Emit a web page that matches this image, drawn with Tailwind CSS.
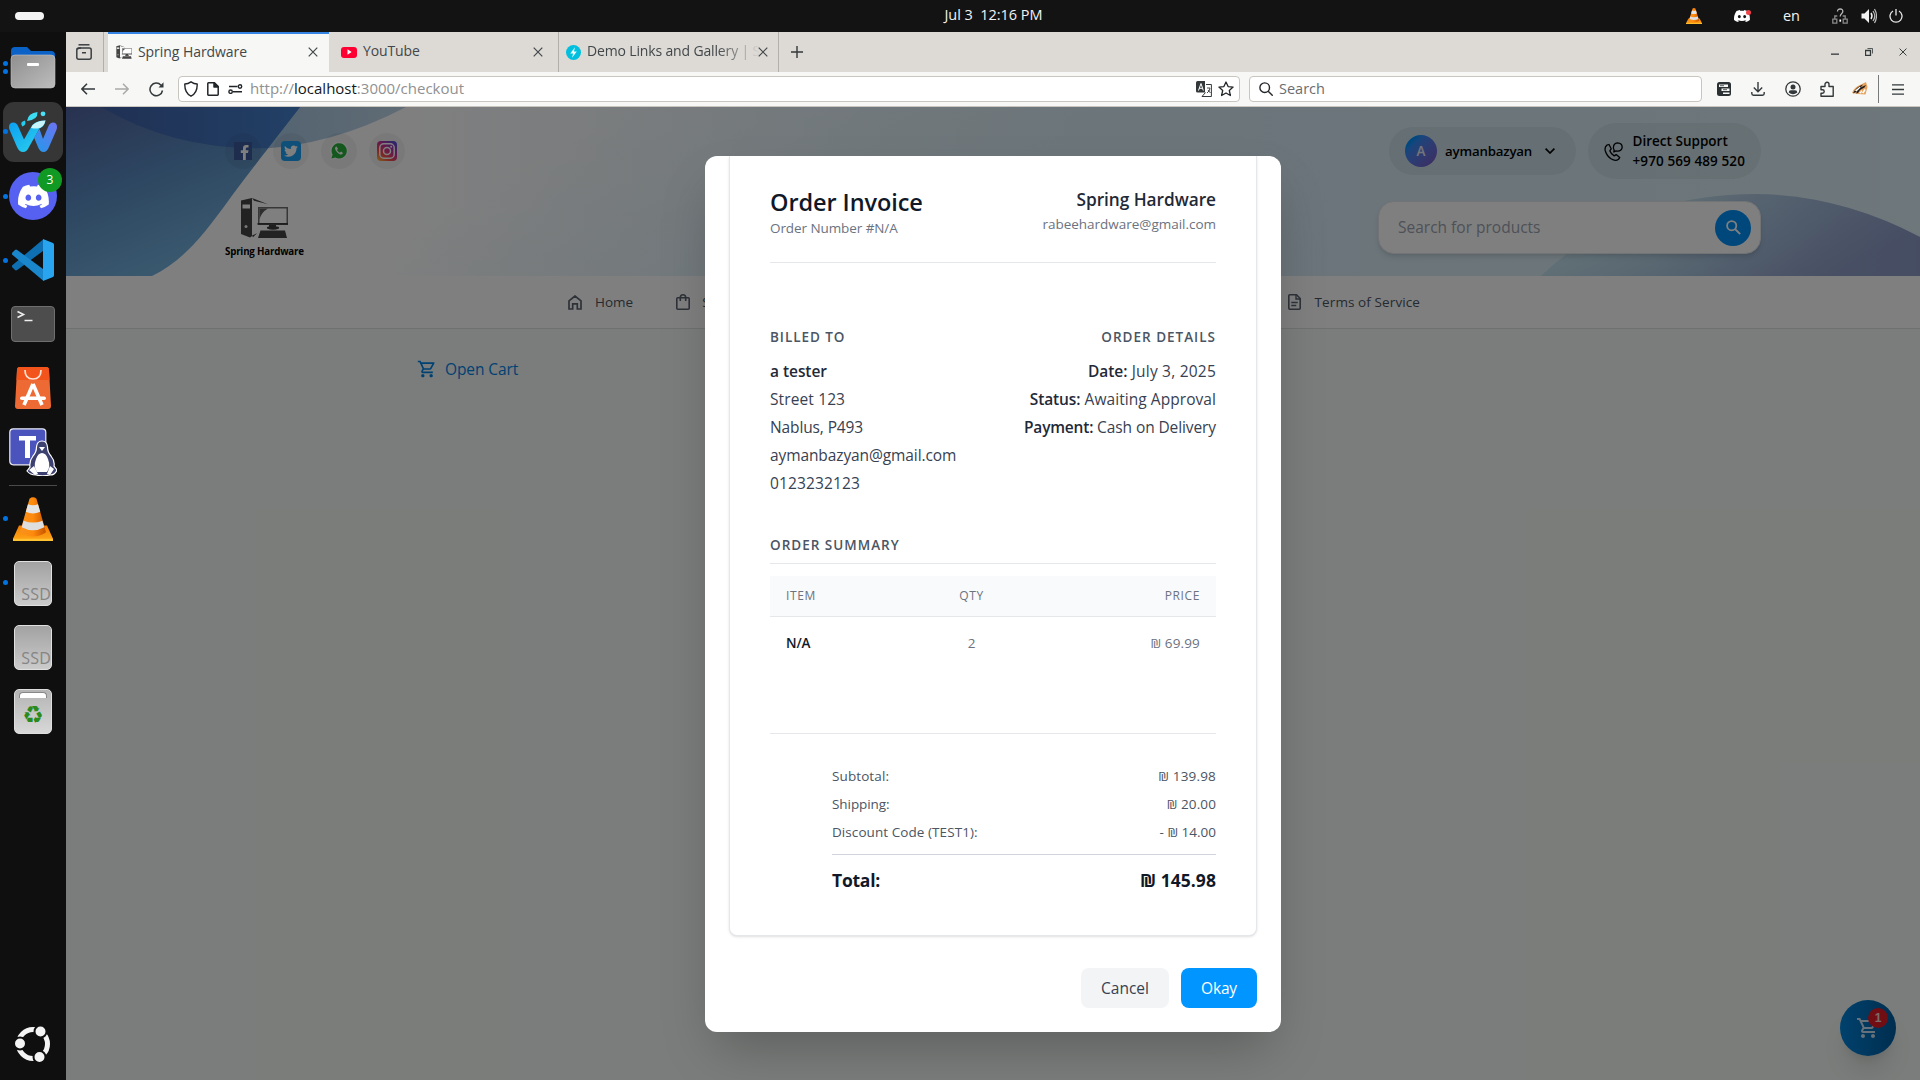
<!DOCTYPE html>
<html lang="en">
<head>
<meta charset="utf-8">
<title>Spring Hardware</title>
<script src="https://cdn.jsdelivr.net/npm/@tailwindcss/browser@4"></script>
</head>
<body class="w-[1920px] h-[1080px] overflow-hidden bg-[#131313] font-['Open_Sans','Noto_Sans',sans-serif] flex flex-col">

<svg class="absolute size-0">
  <defs>
    <linearGradient id="coneG" x1="0" x2="1" y1="0" y2="0"><stop offset="0" stop-color="#f7921e"/><stop offset=".5" stop-color="#ff8a0c"/><stop offset="1" stop-color="#c65300"/></linearGradient>
    <linearGradient id="baseG" x1="0" x2="0" y1="0" y2="1"><stop offset="0" stop-color="#f47b00"/><stop offset="1" stop-color="#ffa91c"/></linearGradient>
  </defs>
  <symbol id="vlc" viewBox="0 0 40 40">
    <path d="M6 26h28l6 12v2H0v-2z" fill="url(#baseG)"/>
    <path d="M0 38h40v2H0z" fill="#ffc233"/>
    <path d="M16.500 1.500Q20-1 23.500 1.500L33 32Q20 40 7 32z" fill="url(#coneG)"/>
    <path d="M15 6.500Q20 8.500 25 6.500L27.200 13.500Q20 16.500 12.800 13.500z" fill="#e4e4e4"/>
    <path d="M10.600 21.500Q20 25 29.400 21.500L31.300 27.500Q20 33 8.700 27.500z" fill="#dedede"/>
  </symbol>
  <symbol id="discord" viewBox="0 0 24 24">
    <path fill="currentColor" d="M20.300 4.400A19.800 19.800 0 0 0 15.400 2.900c-.2.400-.5.900-.6 1.300a18.300 18.300 0 0 0-5.500 0c-.2-.400-.4-.900-.6-1.300a19.700 19.700 0 0 0-4.900 1.500C.5 9-.3 13.600.1 18.100a19.900 19.900 0 0 0 6 3c.5-.6.9-1.300 1.200-2a13 13 0 0 1-1.900-.9l.4-.3a14.200 14.200 0 0 0 12.300 0l.4.300c-.6.400-1.200.6-1.900.9.400.7.800 1.400 1.200 2a19.800 19.800 0 0 0 6-3c.5-5.200-.8-9.700-3.500-13.700zM8 15.300c-1.200 0-2.200-1.100-2.200-2.400s1-2.400 2.200-2.400 2.200 1.100 2.200 2.400-1 2.400-2.200 2.400zm8 0c-1.200 0-2.200-1.100-2.200-2.400s1-2.400 2.200-2.400 2.200 1.100 2.200 2.400-1 2.400-2.200 2.400z"/>
  </symbol>
  <symbol id="cart" viewBox="0 0 24 24">
    <path fill="currentColor" d="M15.550 13c.75 0 1.410-.41 1.750-1.030l3.580-6.490A.996.996 0 0 0 20.010 4H5.210l-.94-2H1v2h2l3.600 7.590-1.350 2.440C4.520 15.370 5.480 17 7 17h12v-2H7l1.100-2h7.450zM6.160 6h12.150l-2.760 5H8.530L6.160 6zM7 18c-1.100 0-1.990.9-1.990 2S5.900 22 7 22s2-.9 2-2-.9-2-2-2zm10 0c-1.100 0-1.990.9-1.990 2s.89 2 1.990 2 2-.9 2-2-.9-2-2-2z"/>
  </symbol>
  <symbol id="x" viewBox="0 0 10 10"><path d="M.7.700l8.600 8.600M9.300.700L.7 9.300" stroke="currentColor" stroke-width="1.200" fill="none"/></symbol>
  <symbol id="pc" viewBox="0 0 48 42">
    <path d="M1 3.500L12 1v38l-2 1.500L1 37z" fill="#454545"/>
    <path d="M2.500 7.500h7.500v4H2.500z" fill="#fff"/>
    <circle cx="6" cy="29.500" r="1.500" fill="#eee"/>
    <path d="M12 1l16 6.200L14 3.800zM12 38.500l5-2.200-4 4z" fill="#454545"/>
    <path d="M18 10h30v18H18z" fill="#6e6e6e"/>
    <path d="M19.500 11.500h27v14.500h-27z" fill="#fff"/>
    <path d="M19.500 11.500h8.500q-7 4-8.500 11z" fill="#5a5a5a"/>
    <path d="M17.500 26h30.500v1.800H17.500zM29 28h7v1.500h-7zM27 30q5.500-2 12 0v1.500q-6 2.500-12 0z" fill="#3c3c3c"/>
    <path d="M20.500 33.500h24.500l2 7.500H18z" fill="#454545"/>
  </symbol>
</svg>

<!-- system bar -->
<div class="h-8 shrink-0 pl-[66px] pr-[13px] grid grid-cols-[1fr_auto_1fr] items-center text-[#f2f2f2] text-[14.5px]">
  <div class="-ml-[51px] w-[29px] h-2 rounded-full bg-[#f4f4f4]"></div>
  <div class="whitespace-pre tracking-[-0.03px] translate-x-[7px] -mt-0.5">Jul 3  12:16 PM</div>
  <div class="flex items-center justify-end">
    <svg class="w-4 h-4"><use href="#vlc"/></svg>
    <div class="relative ml-8 mr-px w-4 h-4 flex items-center">
      <svg class="w-4 h-4 text-white"><use href="#discord"/></svg>
      <span class="absolute -right-px top-0.5 size-[5px] rounded-full bg-[#f04349]"></span>
    </div>
    <span class="ml-8 leading-4">en</span>
    <svg class="ml-8 w-4 h-4" viewBox="0 0 16 16" fill="none" stroke="#8a8a8a" stroke-width="1.300"><path d="M.8 11.200h4v4h-4zM11.200 11.200h4v4h-4zM2.800 11V8h2.500M13.200 11V8h-2.500"/><path d="M5.500 3.500q0-2.500 2.700-2.500t2.600 2.500c0 2-2.600 2-2.600 5" stroke="#b8b8b8"/><path d="M7.400 11.500h1.700v2.200H7.400z" fill="#fff" stroke="none"/></svg>
    <svg class="ml-[13px] w-4 h-4" viewBox="0 0 16 16"><path d="M.5 5.500h3L8 1v14L3.500 10.500h-3z" fill="#f2f2f2"/><path d="M10 5q2 3 0 6" stroke="#f2f2f2" stroke-width="1.500" fill="none"/><path d="M12 3q3.500 5 0 10M13.500 1q4 7 0 14" stroke="#bbb" stroke-width="1.200" fill="none"/></svg>
    <svg class="ml-3 mr-1 w-[14px] h-[14px]" viewBox="0 0 14 14" fill="none" stroke="#e8e8e8" stroke-width="1.300"><path d="M4 2a6 6 0 1 0 6 0M7 0v6.500"/></svg>
  </div>
</div>

<div class="flex flex-1 min-h-0">
  <!-- dock -->
  <aside class="w-[66px] shrink-0 bg-[#0f0f0f] pt-1 pb-[18px] flex flex-col items-center">
    <div class="relative w-full h-16 shrink-0 flex items-center justify-center">
      <span class="absolute left-[3px] top-[25px] size-[5px] rounded-full bg-[#0073e5]"></span>
      <span class="absolute left-[3px] top-[33px] size-[5px] rounded-full bg-[#0073e5]"></span>
      <svg class="w-[46px] h-[42px]" viewBox="0 0 46 42"><defs><linearGradient id="fg" x1="0" y1="0" x2="1" y2="1"><stop offset="0" stop-color="#8f8f8f"/><stop offset="1" stop-color="#bdbdbd"/></linearGradient></defs><path d="M1 4a4 4 0 0 1 4-4h12l4 4h20a4 4 0 0 1 4 4v8H1z" fill="#0a62c6"/><path d="M1 12q0-4 4-4h36q4 0 4 4v25a4 4 0 0 1-4 4H5a4 4 0 0 1-4-4z" fill="url(#fg)" stroke="#c4c4c4" stroke-width=".6"/><rect x="17" y="16" width="12" height="3" rx="1" fill="#fff"/></svg>
    </div>
    <div class="relative w-full h-16 shrink-0 flex items-center justify-center">
      <div class="size-[60px] rounded-[11px] bg-[#363636] flex items-center justify-center">
        <svg class="w-12 h-[42px]" viewBox="0 0 48 42">
          <defs>
            <linearGradient id="w1" x1="0" y1="0" x2="1" y2="1"><stop offset="0" stop-color="#0b9df0"/><stop offset="1" stop-color="#2fd6ee"/></linearGradient>
            <linearGradient id="w2" x1="0" y1="1" x2="1" y2="0"><stop offset="0" stop-color="#1f9bea"/><stop offset="1" stop-color="#6f72f2"/></linearGradient>
          </defs>
          <path d="M0 16q0-4.500 4.500-4.500 3 0 4.500 3.500l6 13.500 8-14q4-5 13.500-5-1 6-6 8L20 36q-2 5-6 5t-6-5L.6 19Q0 17.500 0 16z" fill="url(#w1)"/>
          <path d="M25 26.500l5.500-8.500L34 28l5.500-13q1.500-3.500 4.500-3.500 4 0 4 4.500 0 1.500-.6 3L40 36q-2 5-5.500 5T29 36z" fill="url(#w2)"/>
          <path d="M22 17q3-7.500 14.500-7.500-1.500 7-8 8-2 .4-6.500-.5z" fill="#c8f5fb"/>
          <path d="M18 10q1-8 10.500-9 .5 8-10.500 9z" fill="#3cdcf3"/><circle cx="34" cy="2.800" r="2.400" fill="#4be0f6"/><path d="M13.500 15.500q-3.500-4.500 2.500-6 1.500 4.500-2.500 6z" fill="#26cdf2"/>
        </svg>
      </div>
      <span class="absolute left-[3px] top-[29px] size-[5px] rounded-full bg-[#0073e5]"></span>
    </div>
    <div class="relative w-full h-16 shrink-0 flex items-center justify-center">
      <span class="absolute left-[3px] top-[30px] size-[5px] rounded-full bg-[#0073e5]"></span>
      <div class="size-12 rounded-full bg-[#5661f2] flex items-center justify-center text-white"><svg class="size-[31px]"><use href="#discord"/></svg></div>
      <span class="absolute left-[38px] top-[4px] size-[24px] rounded-full bg-[#109a23] text-white text-[12px] leading-[24px] text-center">3</span>
    </div>
    <div class="relative w-full h-16 shrink-0 flex items-center justify-center">
      <span class="absolute left-[3px] top-[30px] size-[5px] rounded-full bg-[#0073e5]"></span>
      <svg class="w-[42px] h-[42px]" viewBox="0 0 42 42"><path d="M0 26.500q-.5 1 .5 2L3 31q1 .8 2.200 0L31 12V.500z" fill="#0e6fb3"/><path d="M0 15.500q-.5-1 .5-2L3 11q1-.8 2.200 0L31 30v11.500z" fill="#1a87cd"/><path d="M31 0l10 4q1 .5 1 2v30q0 1.500-1 2l-10 4z" fill="#28a5ee"/></svg>
    </div>
    <div class="w-full h-16 shrink-0 flex items-center justify-center">
      <div class="w-11 h-9 rounded-[4px] bg-[#4d4d4d] border border-[#6f6f6f]"><svg class="size-full" viewBox="0 0 42 34" fill="none" stroke="#eee" stroke-width="1.600"><path d="M5.500 4.500l6 3-6 3M12.500 13.500h8"/></svg></div>
    </div>
    <div class="w-full h-16 shrink-0 flex items-center justify-center">
      <svg class="w-9 h-[42px]" viewBox="0 0 36 42"><path d="M2 3a3 3 0 0 1 3-3h26a3 3 0 0 1 3 3l2 36a3 3 0 0 1-3 3H3a3 3 0 0 1-3-3z" fill="#ee6a34"/><path d="M2 3a3 3 0 0 1 3-3h26a3 3 0 0 1 3 3l.5 10H1.500z" fill="#f2541b"/><path d="M10 3q0 9 8 9t8-9" fill="none" stroke="#ffe3d6" stroke-width="1.700"/><path d="M18 17L9 38M18 17l9 21" stroke="#fff" stroke-width="3.600" fill="none"/><rect x="5" y="29.500" width="26" height="3.600" rx="1.800" fill="#fff"/></svg>
    </div>
    <div class="w-full h-16 shrink-0 flex items-center justify-center">
      <svg class="w-12 h-12" viewBox="0 0 48 48"><rect x=".8" y=".8" width="36" height="36" rx="3.500" fill="#4b53bc" stroke="#e9e9f5" stroke-width="1.200"/><path d="M10 8h17v4.500h-6V30h-5V12.500h-6z" fill="#fff"/><path d="M33 13q5 0 5.500 6 0 5 3.500 9 4 5 3 10l3 4q-2 5-7 5-8 1.500-14 0-6 0-9-4l3-4q-1-6 3-11 3.500-4 3.500-9 .5-6 5.500-6z" fill="#3c4170" stroke="#fff" stroke-width="1.200"/><path d="M33 25q4 0 6 6 3 8-1 13h-10q-4-5-1-13 2-6 6-6zM30 19h6l-3 4z" fill="#fff"/><path d="M20 42l5-4 4 8-3 1zM45 41l-4-3-3 8 3 1z" fill="#fff"/></svg>
    </div>
    <div class="w-12 h-px my-px bg-[#4a4a4a] shrink-0"></div>
    <div class="relative w-full h-16 shrink-0 flex items-center justify-center">
      <span class="absolute left-[3px] top-[29px] size-[5px] rounded-full bg-[#0073e5]"></span>
      <svg class="w-10 h-11" viewBox="0 0 40 40" preserveAspectRatio="none"><use href="#vlc" width="40" height="40"/></svg>
    </div>
    <div class="relative w-full h-16 shrink-0 flex items-center justify-center">
      <span class="absolute left-[3px] top-[29px] size-[5px] rounded-full bg-[#0073e5]"></span>
      <div class="w-[38px] h-[45px] rounded-[5px] bg-linear-to-b from-[#a2a2a2] to-[#cbcbcb] border border-[#e0e0e0] flex items-end justify-end text-[16px] leading-[22px] tracking-[0.2px] text-[#858585]">SSD</div>
    </div>
    <div class="w-full h-16 shrink-0 flex items-center justify-center">
      <div class="w-[38px] h-[45px] rounded-[5px] bg-linear-to-b from-[#a2a2a2] to-[#cbcbcb] border border-[#e0e0e0] flex items-end justify-end text-[16px] leading-[22px] tracking-[0.2px] text-[#858585]">SSD</div>
    </div>
    <div class="w-full h-16 shrink-0 flex items-center justify-center">
      <div class="w-[38px] h-[45px] rounded-[5px] bg-linear-to-b from-[#b4b4b4] to-[#d8d8d8] border border-[#dedede] flex flex-col items-center">
        <div class="mt-[2px] w-[28px] h-[6px] bg-white border border-[#888] border-b-0 rounded-t"></div>
        <span class="text-[24px] leading-[28px] mt-[3px] text-[#2a8a1c] font-['DejaVu_Sans',sans-serif]">♻</span>
      </div>
    </div>
    <svg class="mt-auto w-9 h-9" viewBox="0 0 36 36"><circle cx="18" cy="18" r="14.500" fill="none" stroke="#f4f4f4" stroke-width="5"/><g fill="#f4f4f4" stroke="#0f0f0f" stroke-width="2"><circle cx="5" cy="17.500" r="6"/><circle cx="25.500" cy="5.500" r="6"/><circle cx="24.500" cy="31" r="6"/></g></svg>
  </aside>

  <!-- browser window -->
  <main class="flex-1 min-w-0 flex flex-col">
    <!-- tabs -->
    <div class="h-10 shrink-0 bg-[#dddad5] flex items-center text-[14px] leading-5 text-[#42474a]">
      <div class="w-[38px] h-full border-r border-[#b2afaa] flex items-center justify-center">
        <svg class="w-4 h-4 -ml-0.5" viewBox="0 0 16 16" fill="none" stroke="#3a3f42" stroke-width="1.500"><path d="M2.500.800h11"/><rect x=".8" y="4" width="14.400" height="11.200" rx="2"/><path d="M1 5.200q2-1.200 4-1.200M6 8.800h4"/></svg>
      </div>
      <div class="ml-1 w-[221px] h-full bg-[#f7f7f5] border-t-2 border-[#3584e4] flex items-center pl-2 pr-[11px] pb-0.5">
        <svg class="w-4 h-[14px]" ><use href="#pc"/></svg>
        <span class="ml-[6px] tracking-[-0.06px]">Spring Hardware</span>
        <svg class="ml-auto size-[10px]"><use href="#x"/></svg>
      </div>
      <div class="w-[230px] h-full border-r border-[#b2afaa] flex items-center pl-3 pr-[15px]">
        <span class="w-4 h-[11px] rounded-[3px] bg-[#ff0033] flex items-center justify-center"><svg class="w-[5px] h-[6px]" viewBox="0 0 5 6"><path d="M.5.200L4.700 3 .5 5.800z" fill="#fff"/></svg></span>
        <span class="ml-[6px] -mt-0.5 tracking-[-0.13px]">YouTube</span>
        <svg class="ml-auto size-[10px]"><use href="#x"/></svg>
      </div>
      <div class="w-[220px] h-full border-r border-[#b2afaa] flex items-center pl-[7px] pr-[10px]">
        <svg class="size-[15px] shrink-0" viewBox="0 0 16 16"><circle cx="8" cy="8" r="8" fill="#00bfdf"/><path d="M9.500 2.500L4.500 9h3l-1 4.500L11.500 7h-3z" fill="#e9fbff"/></svg>
        <span class="ml-[6px] -mt-0.5 -mr-2 shrink-0 whitespace-nowrap tracking-[-0.15px] mask-r-from-75% mask-r-to-100%">Demo Links and Gallery | S</span>
        <svg class="ml-auto size-[10px] shrink-0"><use href="#x"/></svg>
      </div>
      <svg class="ml-3 size-3" viewBox="0 0 12 12" stroke="#33383b" stroke-width="1.400"><path d="M6 0v12M0 6h12"/></svg>
      <div class="ml-auto mr-[13px] flex items-center gap-[26px] text-[#33383b]">
        <svg class="w-2 h-2" viewBox="0 0 8 8"><path d="M0 5.500h8v1.300H0z" fill="#33383b"/></svg>
        <svg class="w-2 h-2" viewBox="0 0 8 8" fill="none" stroke="#33383b"><path d="M.5 2.500h5v5h-5z" stroke-width="1.300"/><path d="M2.500.500h5v5" stroke-width=".8"/></svg>
        <svg class="size-2"><use href="#x"/></svg>
      </div>
    </div>
    <!-- toolbar -->
    <div class="h-[35px] shrink-0 bg-[#f7f7f5] border-b border-[#c9c6bf] flex items-center text-[15px] leading-5 text-[#33383b] pr-[14px]">
      <svg class="ml-[15px] w-[14px] h-3" viewBox="0 0 14 12" fill="none" stroke="#33383b" stroke-width="1.500"><path d="M14 6H1M6 .7L.9 6 6 11.300"/></svg>
      <svg class="ml-5 w-[14px] h-3" viewBox="0 0 14 12" fill="none" stroke="#ababa9" stroke-width="1.500"><path d="M0 6h13M8 .7L13.100 6 8 11.300"/></svg>
      <svg class="ml-5 size-[15px]" viewBox="0 0 15 15" fill="none" stroke="#33383b" stroke-width="1.500"><path d="M13.500 8.500A6.300 6.300 0 1 1 12 3.200"/><path d="M9.500 5.500H14.500V.300z" fill="#33383b" stroke="none"/></svg>
      <div class="ml-[14px] w-[1062px] h-[26px] bg-white border border-[#c9c6bf] rounded-[4px] flex items-center pl-[5px] pr-[5px]">
        <svg class="w-[14px] h-4" viewBox="0 0 14 16" fill="none" stroke="#222629" stroke-width="1.400" stroke-linejoin="round"><path d="M7 .8q3 2 6.200 2.200Q13.500 12 7 15.200.5 12 .8 3 4 2.800 7 .8z"/></svg>
        <svg class="ml-[9px] w-3 h-[14px]" viewBox="0 0 12 14" fill="none" stroke="#222629" stroke-width="1.500" stroke-linejoin="round"><path d="M.8 1.500q0-.7.700-.7H7.500l3.700 3.700v8q0 .7-.7.700h-9q-.7 0-.7-.7z"/><path d="M7 1v4h4.500z" fill="#222629"/></svg>
        <svg class="ml-[9px] w-[15px] h-[10px]" viewBox="0 0 15 10" fill="none" stroke="#222629" stroke-width="1.400"><path d="M1 2.500h8.500M5 7.800h9"/><circle cx="12" cy="2.500" r="1.700"/><circle cx="2.600" cy="7.700" r="1.700"/></svg>
        <span class="ml-[7px] -mt-0.5 text-[#8f9192]">http://<span class="text-[#15181a]">localhost</span>:3000/checkout</span>
        <svg class="ml-auto size-4" viewBox="0 0 16 16"><path d="M0 1.500Q0 0 1.500 0H9v11.500H1.500Q0 11.500 0 10z" fill="#33383b"/><path d="M2.500 9.500L5 2.500l2.300 7M3.300 7.300h3.300" stroke="#fff" fill="none"/><path d="M10 3.500h5.400v12H6L9.500 11.500" fill="none" stroke="#33383b"/><path d="M11 7h3q0 3-3 5M12 9l2.500 3" stroke="#33383b" fill="none" stroke-width=".9"/></svg>
        <svg class="ml-[6px] size-4" viewBox="0 0 16 16" fill="none" stroke="#222629" stroke-width="1.300" stroke-linejoin="round"><path d="M8 1l2.100 4.600 5 .5-3.800 3.400 1.100 5L8 12l-4.400 2.500 1.100-5L.9 6.100l5-.5z"/></svg>
      </div>
      <div class="ml-[9px] w-[453px] h-[26px] bg-white border border-[#c9c6bf] rounded-[4px] flex items-center pl-[9px]">
        <svg class="size-[14px]" viewBox="0 0 14 14" fill="none" stroke="#222629" stroke-width="1.400"><circle cx="5.700" cy="5.700" r="4.800"/><path d="M9.200 9.200l4.500 4.500"/></svg>
        <span class="ml-[6px] text-[14.5px] text-[#6a6d6f]">Search</span>
      </div>
      <svg class="ml-[15px] size-[14px]" viewBox="0 0 14 14"><rect width="14" height="14" rx="2.500" fill="#2b3033"/><path d="M2 2.500h9v2.500H2zM4.500 6.500h8V9h-8zM6 10.500h6.500V12H6z" fill="#f7f7f5"/><path d="M3 3.700h4M6 7.700h4" stroke="#2b3033" stroke-width=".8"/></svg>
      <svg class="ml-5 size-[14px]" viewBox="0 0 14 14" fill="none" stroke="#33383b" stroke-width="1.400"><path d="M7 0v9.500M2.800 5.500L7 9.700l4.200-4.200M.8 10v1.500q0 1.700 1.700 1.700h9q1.700 0 1.700-1.700V10"/></svg>
      <svg class="ml-5 size-4" viewBox="0 0 16 16"><circle cx="8" cy="8" r="7.200" fill="none" stroke="#33383b" stroke-width="1.300"/><circle cx="8" cy="6" r="2.500" fill="#33383b"/><path d="M3.700 11.500q0-2.300 2.300-2.300h4q2.300 0 2.300 2.300Q8 15 3.700 11.500z" fill="#33383b"/></svg>
      <svg class="ml-[19px] w-[14px] h-4" viewBox="0 0 14 16" fill="none" stroke="#33383b" stroke-width="1.400" stroke-linejoin="round"><path d="M1 5.500h4V3.300a2 2 0 0 1 4 0v2.200h4.200v9.700H1v-3h1.500a1.600 1.600 0 0 0 0-3.400H1z"/></svg>
      <svg class="ml-[18px] w-4 h-[14px]" viewBox="0 0 16 14"><path d="M0 11Q2 5 9 2.500L14 0l1.500 5-2 7.500L6 12z" fill="#e6a25e"/><path d="M1 11.500Q4 5 11 2.500L8.500 5.500 14 3 12.500 5.500 8 8l-2 3-2 .5 1-2z" fill="#24201e"/><path d="M3 8.500L8 4.500l.5 1-4 4zM10 10.500l3-4 .5 2-2 3zM7 11l3-3v2l-1.500 1.500z" fill="#fff"/></svg>
      <div class="ml-[10px] w-px h-[28px] bg-[#77797a]"></div>
      <svg class="ml-[13px] w-3 h-[11px]" viewBox="0 0 12 11" stroke="#33383b" stroke-width="1.300"><path d="M0 .8h12M0 5.500h12M0 10.200h12"/></svg>
    </div>

    <!-- page -->
    <div class="relative flex-1 min-h-0 overflow-hidden bg-[#f5faf6]">
      <header class="relative h-[169px] px-[159px] py-4 overflow-hidden bg-white">
        <svg class="absolute inset-0 w-full h-full" viewBox="0 0 1854 169" preserveAspectRatio="none">
          <defs>
            <linearGradient id="wL" gradientUnits="userSpaceOnUse" x1="0" y1="0" x2="70" y2="169"><stop offset="0" stop-color="#5064a0"/><stop offset=".5" stop-color="#5b8cc2"/><stop offset="1" stop-color="#72b0dc"/></linearGradient>
            <linearGradient id="wE" x1="0" y1="0" x2="1" y2="0"><stop offset="0" stop-color="#3f62a8"/><stop offset="1" stop-color="#4580cc"/></linearGradient>
            <linearGradient id="wO" x1="0" y1="0" x2="1" y2="0"><stop offset="0" stop-color="#a5c5e2"/><stop offset="1" stop-color="#c0d8ea"/></linearGradient>
            <linearGradient id="wM" x1="0" y1="0" x2="1" y2="0"><stop offset="0" stop-color="#e2f1f8" stop-opacity="0"/><stop offset=".38" stop-color="#e6f1f6"/><stop offset=".6" stop-color="#e0ecf6"/><stop offset="1" stop-color="#eff6f6"/></linearGradient>
            <linearGradient id="wF" gradientUnits="userSpaceOnUse" x1="560" y1="0" x2="700" y2="240"><stop offset="0" stop-color="#cfe8f4" stop-opacity="0"/><stop offset="1" stop-color="#cfe8f4" stop-opacity=".6"/></linearGradient>
            <linearGradient id="wH" gradientUnits="userSpaceOnUse" x1="1640" y1="80" x2="1700" y2="200"><stop offset="0" stop-color="#c2dfec"/><stop offset=".5" stop-color="#acc8e0"/><stop offset="1" stop-color="#98a8cc"/></linearGradient>
            <linearGradient id="wR" x1="0" y1="0" x2="1" y2="0"><stop offset=".3" stop-color="#7f8cc0" stop-opacity="0"/><stop offset="1" stop-color="#7f8cc0" stop-opacity=".45"/></linearGradient>
          </defs>
          <rect x="330" width="1524" height="169" fill="url(#wM)"/>
          <rect x="330" width="1524" height="169" fill="url(#wF)"/>
          <path d="M340 0Q260 42 180 42L234 0z" fill="url(#wO)"/>
          <path d="M0 0H234C215 25 195 50 165 90C135 132 115 155 86 169H0z" fill="url(#wL)"/>
          <path d="M35 0H234L202 41Q110 44 35 0z" fill="url(#wE)"/>
          <path d="M1475 169Q1560 87 1690 87 1775 88 1854 130V169z" fill="url(#wH)"/>
          <path d="M1475 169Q1560 87 1690 87 1775 88 1854 130V169z" fill="url(#wR)"/>
        </svg>
        <div class="relative h-14 flex items-center justify-between">
          <div class="flex gap-3">
            <div class="size-9 rounded-full bg-black/5 flex items-center justify-center"><svg class="w-[18px] h-[18px]" viewBox="0 0 18 18"><path d="M0 0h18v18H0z" fill="#3c5a9a"/><path d="M9 18v-7H6.800V8.300H9V6.300Q9 3 12.300 3h2.200v2.600H13q-1.200 0-1.200 1.200v1.500h2.700L14 11h-2.200v7z" fill="#fff"/></svg></div>
            <div class="size-9 rounded-full bg-black/5 flex items-center justify-center"><svg class="size-5" viewBox="0 0 20 20"><rect width="20" height="20" rx="4" fill="#1da1f2"/><path transform="translate(3 3.200) scale(.58)" d="M24 4.600c-.9.400-1.800.7-2.800.8 1-.6 1.800-1.600 2.200-2.700-1 .6-2 1-3.100 1.200A4.900 4.900 0 0 0 11.900 8.400C7.700 8.200 4.100 6.300 1.700 3.200c-1.300 2.200-.7 5.100 1.500 6.600-.8 0-1.600-.2-2.200-.6 0 2.300 1.600 4.400 3.900 4.900-.7.200-1.500.2-2.200.1.600 2 2.400 3.400 4.600 3.400A9.900 9.900 0 0 1 0 19.500 13.900 13.900 0 0 0 7.500 21.700c9.100 0 14.300-7.700 14-14.600 1-.7 1.800-1.600 2.500-2.500z" fill="#fff"/></svg></div>
            <div class="size-9 rounded-full bg-black/5 flex items-center justify-center"><svg class="size-[18px]" viewBox="0 0 18 18"><path d="M0 18l1.500-4.500A9 8.800 0 1 1 5 16.500z" fill="#fff"/><path d="M1.400 16.600l1.200-4A7.600 7.600 0 1 1 5.400 15.400z" fill="#29b03c"/><path d="M6.500 4.500L5.400 5q-1 1.500.5 3.800 1.700 2.700 4.300 3.600 2 .5 2.800-1.400l-2-1.500-1.200 1.200Q7.800 9.800 7 8l1-1.200z" fill="#fff"/></svg></div>
            <div class="size-9 rounded-full bg-black/5 flex items-center justify-center"><svg class="size-5" viewBox="0 0 20 20"><defs><linearGradient id="ig" x1="0" y1="1" x2=".8" y2="0"><stop offset="0" stop-color="#ffc23c"/><stop offset=".35" stop-color="#fb4a4a"/><stop offset=".65" stop-color="#c7309e"/><stop offset="1" stop-color="#5a4bd8"/></linearGradient></defs><rect width="20" height="20" rx="4" fill="url(#ig)"/><rect x="2.800" y="2.800" width="14.400" height="14.400" rx="4" fill="none" stroke="#fff" stroke-width="1.500"/><circle cx="10" cy="10" r="3.500" fill="none" stroke="#fff" stroke-width="1.500"/><circle cx="14.200" cy="5.800" r="1" fill="#fff"/></svg></div>
          </div>
          <div class="flex items-center gap-3 text-black font-semibold text-[13.5px] leading-5">
            <div class="w-[187px] h-12 rounded-full bg-black/5 flex items-center pl-4">
              <span class="size-8 rounded-full bg-linear-to-br from-[#0091ff] from-20% to-[#7a55c0] text-[#e8eaf4] flex items-center justify-center text-[13.5px]">A</span>
              <span class="ml-2 text-[13.25px] tracking-[-0.17px]">aymanbazyan</span>
              <svg class="ml-[13px] w-[10px] h-[6px]" viewBox="0 0 10 6" fill="none" stroke="#000" stroke-width="1.700"><path d="M.6.600L5 5 9.400.600"/></svg>
            </div>
            <div class="w-[173px] h-14 rounded-full bg-black/5 flex items-center pl-4">
              <svg class="w-[19px] h-[19px]" viewBox="0 0 19 19" fill="none" stroke="#000" stroke-width="1.300" stroke-linejoin="round"><path d="M5 2.500L2.800 3.200Q.5 5 1.200 8.500 2.500 13.500 7 16.800q4.500 2.800 7.500.5l1.200-1.700-3.500-3-2 1.300Q7 12 5.800 8.800l1.400-2z"/><path d="M10.200 8.300Q8.800 6 9.700 3.500 11 .8 13.500.800q4.500.200 4.700 4.200-.2 4-4.700 4.200-.8 0-1.500-.3L9.800 10z"/></svg>
              <div class="ml-[9.5px]"><p class="tracking-[0.02px]">Direct Support</p><p class="tracking-[0.1px]">+970 569 489 520</p></div>
            </div>
          </div>
        </div>
        <div class="relative mt-4 h-[65px] flex items-center justify-between">
          <div class="flex flex-col items-center pt-px">
            <svg class="w-12 h-[42px] -ml-px"><use href="#pc"/></svg>
            <span class="mt-[5px] text-[9.75px] leading-[15px] font-bold tracking-[-0.2px] text-black">Spring Hardware</span>
          </div>
          <div class="w-[383px] h-[53px] rounded-2xl bg-white border border-[#e5e7eb] shadow-md flex items-center pl-[19px] pr-[9px]">
            <span class="text-[15.5px] text-[#9ca3af]">Search for products</span>
            <span class="ml-auto size-9 rounded-full bg-[#0090f8] flex items-center justify-center"><svg class="w-[15px] h-[15px]" viewBox="0 0 15 15" fill="none" stroke="#fff" stroke-width="1.800"><circle cx="5.700" cy="5.700" r="4.600"/><path d="M9 9l5.200 5.200"/></svg></span>
          </div>
        </div>
      </header>
      <nav class="h-[53px] bg-white border-b border-[#dfe3e3] flex items-center pl-[502px] pr-[500px] text-[13.5px] font-medium text-[#4b5563]">
        <svg class="w-[14px] h-[15px]" viewBox="0 0 14 15" fill="none" stroke="#5b6472" stroke-width="1.700"><path d="M1 5.800L7 1l6 4.800V14H9.300V8.800H4.700V14H1z"/></svg>
        <span class="ml-[13px]">Home</span>
        <svg class="ml-[43px] w-[14px] h-4" viewBox="0 0 14 16" fill="none" stroke="#5b6472" stroke-width="1.600"><rect x=".8" y="3.800" width="12.400" height="11.400" rx="1"/><path d="M4.300 7V3.500a2.700 2.700 0 0 1 5.400 0V7"/></svg>
        <span class="ml-3">Shop</span>
        <svg class="ml-auto w-[13px] h-4" viewBox="0 0 13 16" fill="none" stroke="#5b6472" stroke-width="1.600"><path d="M.8 1.800Q.8.800 1.800.800H8.500l3.700 3.700v9.700q0 1-1 1H1.800q-1 0-1-1z"/><path d="M8 1v4h4M3.300 8.500h6.400M3.300 11.500h5" stroke-width="1.400"/></svg>
        <span class="ml-[14px] tracking-[0.1px]">Terms of Service</span>
      </nav>
      <div class="pt-7 pl-[351px] flex items-center text-[#0082e6]">
        <svg class="size-[20px]"><use href="#cart"/></svg>
        <span class="ml-2 text-[15.5px] leading-6 tracking-[-0.1px]">Open Cart</span>
      </div>

      <!-- floating cart button -->
      <div class="absolute right-6 bottom-6 size-14 rounded-full bg-linear-to-r from-[#0084dc] to-[#005c9e] shadow-xl flex items-center justify-center text-white/80">
        <svg class="size-6"><use href="#cart"/></svg>
        <span class="absolute left-7 top-2 size-5 rounded-full bg-[#e21c28] text-white/80 text-[12px] leading-5 text-center font-bold font-['Liberation_Sans',sans-serif]">1</span>
      </div>

      <!-- dialog -->
      <div class="absolute inset-0 bg-black/50 flex items-center justify-center">
        <div class="w-[576px] h-[876px] bg-white rounded-xl shadow-2xl overflow-hidden px-6 pb-6">
          <div class="bg-white border border-t-0 border-[#e5e7eb] rounded-b-lg shadow-sm px-10 pt-[30px] pb-[41px] text-[#374151]">
            <div class="h-[77px] flex justify-between border-b border-[#e5e7eb] whitespace-nowrap">
              <div>
                <h1 class="text-[23.5px] leading-8 font-semibold tracking-[-0.08px] text-[#111827]">Order Invoice</h1>
                <p class="text-[13.5px] leading-5 tracking-[-0.08px] text-[#6b7280]">Order Number #N/A</p>
              </div>
              <div class="text-right">
                <h2 class="text-[17.25px] leading-7 font-semibold tracking-[-0.04px] text-[#1f2937]">Spring Hardware</h2>
                <p class="text-[13.5px] leading-5 tracking-[-0.02px] text-[#6b7280]">rabeehardware@gmail.com</p>
              </div>
            </div>
            <div class="mt-16 flex justify-between text-[15.5px] leading-7 whitespace-nowrap">
              <div>
                <h3 class="text-[13.5px] leading-5 mb-[10px] font-semibold tracking-[0.95px] text-[#4b5563]">BILLED TO</h3>
                <p class="font-semibold tracking-[-0.05px] text-[#1f2937]">a tester</p>
                <p class="tracking-[0.12px]">Street 123</p>
                <p class="tracking-[-0.12px]">Nablus, P493</p>
                <p class="tracking-[-0.1px]">aymanbazyan@gmail.com</p>
                <p class="tracking-[0.15px]">0123232123</p>
              </div>
              <div class="text-right">
                <h3 class="text-[13.5px] leading-5 mb-[10px] font-semibold tracking-[1px] text-[#4b5563]">ORDER DETAILS</h3>
                <p class="tracking-[0.22px]"><span class="font-semibold tracking-[-0.05px] text-[#1f2937]">Date:</span> July 3, 2025</p>
                <p class="tracking-[0.06px]"><span class="font-semibold tracking-[-0.1px] text-[#1f2937]">Status:</span> Awaiting Approval</p>
                <p class="tracking-[-0.1px]"><span class="font-semibold tracking-[-0.2px] text-[#1f2937]">Payment:</span> Cash on Delivery</p>
              </div>
            </div>
            <h3 class="mt-[38px] pb-2 border-b border-[#e5e7eb] text-[13.5px] leading-5 font-semibold tracking-[1px] text-[#4b5563]">ORDER SUMMARY</h3>
            <div class="mt-3 h-[41px] grid grid-cols-[145px_113px_1fr] items-center bg-[#f9fafb] border-b border-[#e5e7eb] text-[12px] leading-4 font-medium tracking-[0.6px] text-[#6b7280]">
              <span class="pl-4">ITEM</span><span class="text-center">QTY</span><span class="text-right pr-4">PRICE</span>
            </div>
            <div class="h-[52px] grid grid-cols-[145px_113px_1fr] items-center text-[13.5px] leading-5 text-[#6b7280]">
              <span class="pl-4 font-semibold tracking-[-0.15px] text-[#111827]">N/A</span><span class="text-center">2</span><span class="text-right pr-4 tracking-[0.15px]">₪ 69.99</span>
            </div>
            <div class="mt-16 border-t border-[#e5e7eb] pt-8 pl-[62px] text-[13.5px] leading-5 text-[#4b5563]">
              <div class="flex flex-col gap-2">
                <div class="flex justify-between"><span class="tracking-[0.1px]">Subtotal:</span><span class="tracking-[0.18px]">₪ 139.98</span></div>
                <div class="flex justify-between"><span class="tracking-[-0.07px]">Shipping:</span><span class="tracking-[0.12px]">₪ 20.00</span></div>
                <div class="flex justify-between"><span class="tracking-[0.07px]">Discount Code (TEST1):</span><span>- ₪ 14.00</span></div>
              </div>
              <div class="mt-3 border-t border-[#d1d5db] pt-[11px] flex justify-between text-[17.5px] leading-7 font-bold text-[#111827]"><span class="tracking-[-0.25px]">Total:</span><span class="tracking-[0.05px]">₪ 145.98</span></div>
            </div>
          </div>
          <div class="mt-8 flex justify-end gap-3 text-[15.5px] leading-6">
            <div class="w-[88px] h-10 rounded-lg bg-[#f3f4f6] text-[#374151] flex items-center justify-center">Cancel</div>
            <div class="w-[76px] h-10 rounded-lg bg-[#0095ff] text-white flex items-center justify-center tracking-[-0.15px]">Okay</div>
          </div>
        </div>
      </div>
    </div>
  </main>
</div>
</body>
</html>
